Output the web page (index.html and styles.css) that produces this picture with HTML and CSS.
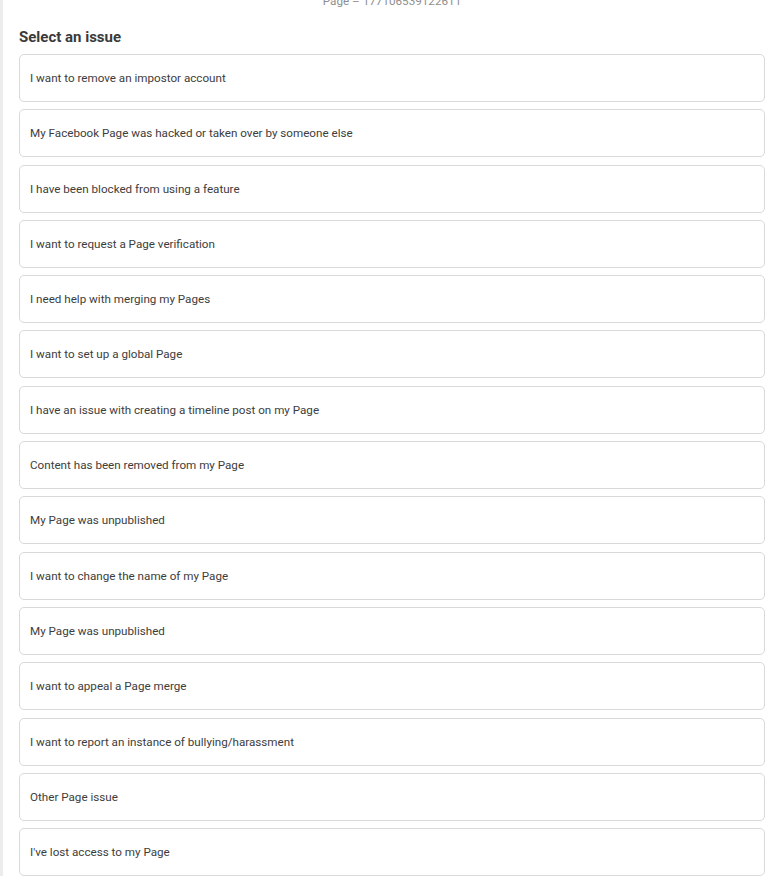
FILE: index.html
```html
<!DOCTYPE html>
<html lang="en">

<head>
    <meta charset="UTF-8">
    <meta name="viewport" content="width=device-width, initial-scale=1.0">
    <title>Select an issue</title>
    <link rel="stylesheet" href="styles.css">
</head>

<body>
    <div class="page">
        <p class="page-id">Page – 177106539122611</p>
        <h2 class="title">Select an issue</h2>
        <ul class="issues">
            <li class="issue">I want to remove an impostor account</li>
            <li class="issue">My Facebook Page was hacked or taken over by someone else</li>
            <li class="issue">I have been blocked from using a feature</li>
            <li class="issue">I want to request a Page verification</li>
            <li class="issue">I need help with merging my Pages</li>
            <li class="issue">I want to set up a global Page</li>
            <li class="issue">I have an issue with creating a timeline post on my Page</li>
            <li class="issue">Content has been removed from my Page</li>
            <li class="issue">My Page was unpublished</li>
            <li class="issue">I want to change the name of my Page</li>
            <li class="issue">My Page was unpublished</li>
            <li class="issue">I want to appeal a Page merge</li>
            <li class="issue">I want to report an instance of bullying/harassment</li>
            <li class="issue">Other Page issue</li>
            <li class="issue">I've lost access to my Page</li>
        </ul>
    </div>
</body>

</html>
```

FILE: styles.css
```css
/* Issue picker */
body {
    font-family: Roboto, Arial, sans-serif;
    margin: 0;
    padding: 0;
    background-color: #ffffff;
}

.page {
    border-left: 3px solid #ececec;
    padding: 0 8px 0 16px;
    min-height: 882px;
}

.page-id {
    margin: 0;
    margin-top: -7px;
    text-align: center;
    color: #8f8f8f;
    font-size: 11.7px;
    line-height: 17px;
}

.title {
    margin: 17px 0 7px;
    font-size: 15px;
    font-weight: bold;
    color: #3a3a3a;
    line-height: 20px;
}

.issues {
    list-style: none;
    margin: 0;
    padding: 0;
}

.issue {
    height: 46px;
    box-sizing: content-box;
    border: 1px solid #d9d9d9;
    border-radius: 5px;
    padding: 0 10px;
    margin-bottom: 7.3px;
    display: flex;
    align-items: center;
    font-size: 11.65px;
    color: #3d3d3d;
}
```
